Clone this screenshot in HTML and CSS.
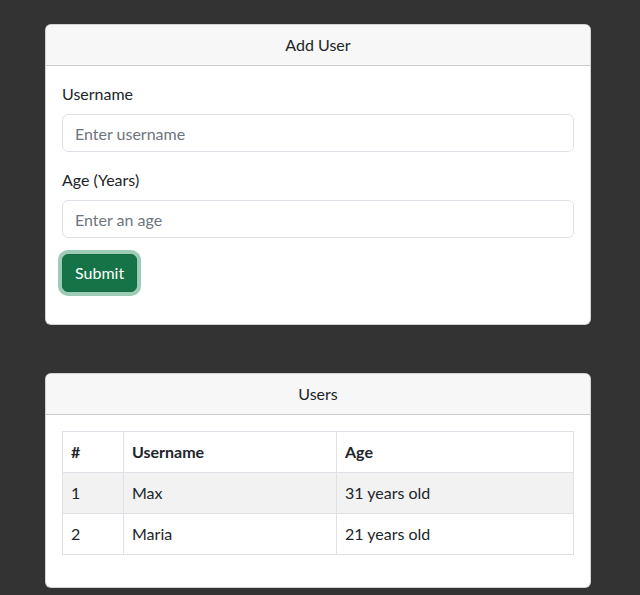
FILE: index.html
```html
<!DOCTYPE html>
<html lang="en">
<head>
<meta charset="utf-8">
<title>Users</title>
<link rel="stylesheet" href="styles.css">
</head>
<body>
<main class="page">
  <section class="card">
    <header class="card-header">Add User</header>
    <div class="card-body">
      <form class="form">
        <div class="field">
          <label class="label" for="username">Username</label>
          <input class="input" id="username" type="text" placeholder="Enter username">
        </div>
        <div class="field">
          <label class="label" for="age">Age (Years)</label>
          <input class="input" id="age" type="text" placeholder="Enter an age">
        </div>
        <div class="field">
          <button class="btn" type="button">Submit</button>
        </div>
      </form>
    </div>
  </section>

  <section class="card">
    <header class="card-header">Users</header>
    <div class="card-body">
      <table class="table">
        <thead>
          <tr><th class="col-num">#</th><th class="col-name">Username</th><th>Age</th></tr>
        </thead>
        <tbody>
          <tr class="striped"><td>1</td><td>Max</td><td>31 years old</td></tr>
          <tr><td>2</td><td>Maria</td><td>21 years old</td></tr>
        </tbody>
      </table>
    </div>
  </section>
</main>
</body>
</html>
```

FILE: styles.css
```css
* { box-sizing: border-box; }
html, body { margin: 0; padding: 0; }
body {
  background: #333333;
  font-family: "Lato", "Noto Sans", "Liberation Sans", sans-serif;
  font-size: 16px;
  line-height: 24px;
  color: #212529;
}
.page {
  width: 546px;
  margin-left: 45px;
  padding-top: 24px;
  display: flex;
  flex-direction: column;
  gap: 48px;
}
.card {
  background: #fff;
  border: 1px solid rgba(0,0,0,.175);
  border-radius: 6px;
  overflow: hidden;
}
.card-header {
  background: #f7f7f7;
  border-bottom: 1px solid rgba(0,0,0,.175);
  padding: 8px 16px;
  text-align: center;
}
.card-body { padding: 16px; }
.form { display: flex; flex-direction: column; }
.field { margin-bottom: 16px; display: flex; flex-direction: column; align-items: flex-start; }
.label { margin-bottom: 8px; }
.input {
  width: 100%;
  height: 38px;
  padding: 6px 12px;
  font: inherit;
  color: #212529;
  border: 1px solid #dee2e6;
  border-radius: 6px;
  background: #fff;
}
.input::placeholder { color: #6c757d; }
.btn {
  font: inherit;
  color: #fff;
  background: #157347;
  border: 1px solid #146c43;
  border-radius: 6px;
  padding: 6px 12px;
  box-shadow: 0 0 0 4px rgba(60,153,110,.5);
}
.table {
  width: 100%;
  border-collapse: collapse;
  margin-bottom: 16px;
}
.table th, .table td {
  border: 1px solid #dee2e6;
  padding: 8px;
  text-align: left;
  vertical-align: top;
}
.table th { font-weight: 700; }
.col-num { width: 61px; }
.col-name { width: 213px; }
.striped td { background: #f2f2f2; }
```
